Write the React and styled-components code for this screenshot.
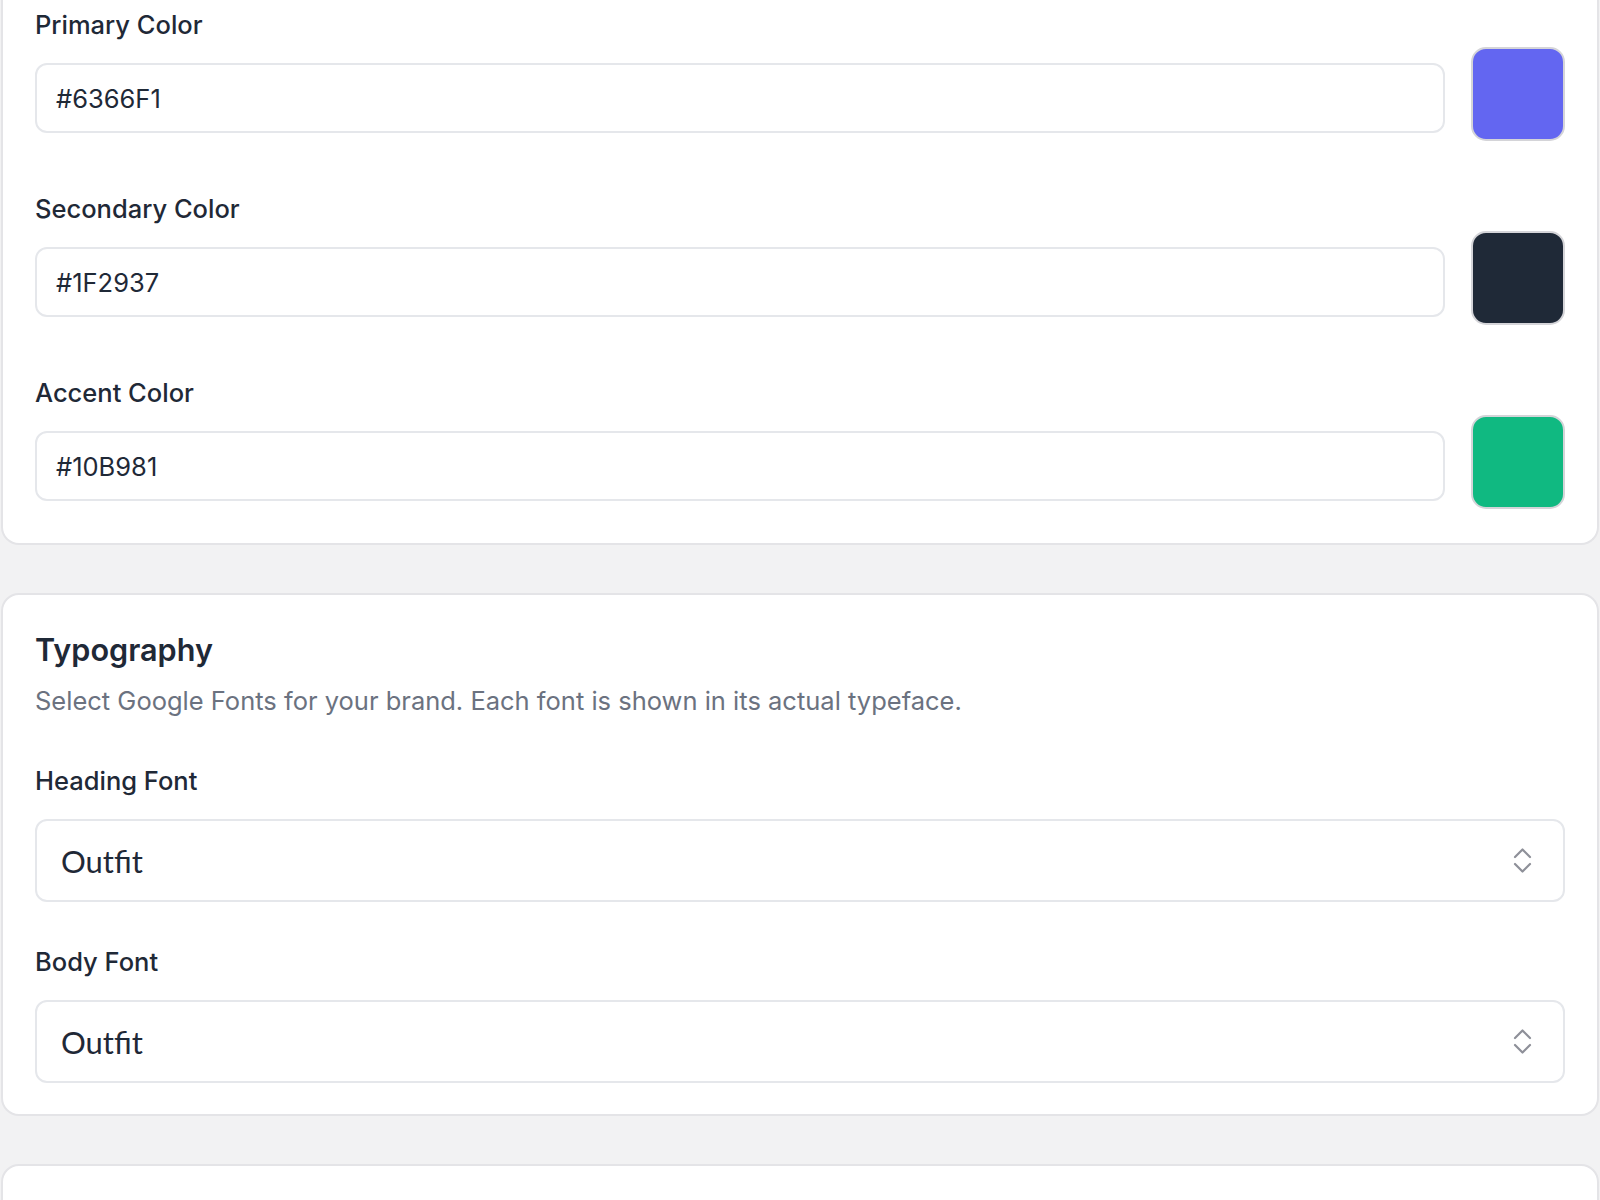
import styled, { createGlobalStyle } from "styled-components";

const GlobalStyle = createGlobalStyle`
  html, body {
    margin: 0;
    padding: 0;
    background: #f2f2f3;
    font-family: Inter, "Noto Sans", sans-serif;
    color: #1f2937;
  }
  * {
    box-sizing: border-box;
  }
`;

const Page = styled.div`
  display: flex;
  flex-direction: column;
  gap: 48px;
  padding: 0 1px;
  height: 1200px;
  overflow: hidden;
`;

const Card = styled.section`
  background: #ffffff;
  border: 2px solid #e4e4e7;
  border-radius: 18px;
  padding: 34px 32px 31px;
  flex-shrink: 0;

  ${(props) =>
    props.$cut &&
    `
    border-top: none;
    border-top-left-radius: 0;
    border-top-right-radius: 0;
    padding-top: 7px;
    padding-bottom: 34px;
  `}
`;

const Fields = styled.div`
  display: flex;
  flex-direction: column;
  gap: ${(props) => props.$gap || 42}px;
`;

const Field = styled.div`
  display: flex;
  flex-direction: column;
`;

const Label = styled.label`
  font-size: 25.5px;
  line-height: 36px;
  font-weight: 500;
  color: #1f2937;
  margin-bottom: ${(props) => props.$gap || 20}px;
`;

const ColorRow = styled.div`
  display: flex;
  align-items: flex-start;
  gap: 26px;
`;

const TextInput = styled.div`
  flex: 1;
  height: 70px;
  margin-top: 16px;
  border: 2px solid #e5e7eb;
  border-radius: 12px;
  padding: 0 19px;
  display: flex;
  align-items: center;
  font-size: 25.5px;
  color: #1f2937;
`;

const Swatch = styled.div`
  width: 94px;
  height: 94px;
  flex-shrink: 0;
  border: 2px solid #d4d4d8;
  border-radius: 15px;
  background: ${(props) => props.color};
`;

const Heading = styled.h2`
  margin: 0;
  font-size: 30.6px;
  line-height: 42px;
  font-weight: 600;
  color: #1f2937;
`;

const Description = styled.p`
  margin: 12px 0 44px;
  font-size: 25.5px;
  line-height: 36px;
  color: #6b7280;
`;

const Select = styled.div`
  height: 83px;
  border: 2px solid #e5e7eb;
  border-radius: 12px;
  padding: 0 31px 0 24px;
  display: flex;
  align-items: center;
  justify-content: space-between;
  font-family: ${(props) => props.$font};
  font-size: 31px;
  color: #1f2937;
`;

const ChevronIcon = styled.svg`
  width: 19px;
  height: 25px;
  color: #8e9099;
`;

const EmptyCard = styled(Card)`
  height: 80px;
`;

function UpDown() {
  return (
    <ChevronIcon viewBox="0 0 19 25" fill="none">
      <polyline
        points="2,9 9.5,1.5 17,9"
        stroke="currentColor"
        strokeWidth="2.2"
        strokeLinecap="round"
        strokeLinejoin="round"
      />
      <polyline
        points="2,16 9.5,23.5 17,16"
        stroke="currentColor"
        strokeWidth="2.2"
        strokeLinecap="round"
        strokeLinejoin="round"
      />
    </ChevronIcon>
  );
}

const colors = [
  { label: "Primary Color", value: "#6366F1" },
  { label: "Secondary Color", value: "#1F2937" },
  { label: "Accent Color", value: "#10B981" },
];

const fonts = [
  { label: "Heading Font", value: "Outfit" },
  { label: "Body Font", value: "Outfit" },
];

export default function App() {
  return (
    <>
      <GlobalStyle />
      <Page>
        <Card $cut>
          <Fields $gap={50}>
            {colors.map((c) => (
              <Field key={c.label}>
                <Label $gap={4}>{c.label}</Label>
                <ColorRow>
                  <TextInput>{c.value}</TextInput>
                  <Swatch color={c.value} />
                </ColorRow>
              </Field>
            ))}
          </Fields>
        </Card>

        <Card>
          <Heading>Typography</Heading>
          <Description>
            Select Google Fonts for your brand. Each font is shown in its actual
            typeface.
          </Description>
          <Fields $gap={42}>
            {fonts.map((f) => (
              <Field key={f.label}>
                <Label>{f.label}</Label>
                <Select $font={`Lato, "Noto Sans", sans-serif`}>
                  <span>{f.value}</span>
                  <UpDown />
                </Select>
              </Field>
            ))}
          </Fields>
        </Card>

        <EmptyCard />
      </Page>
    </>
  );
}
